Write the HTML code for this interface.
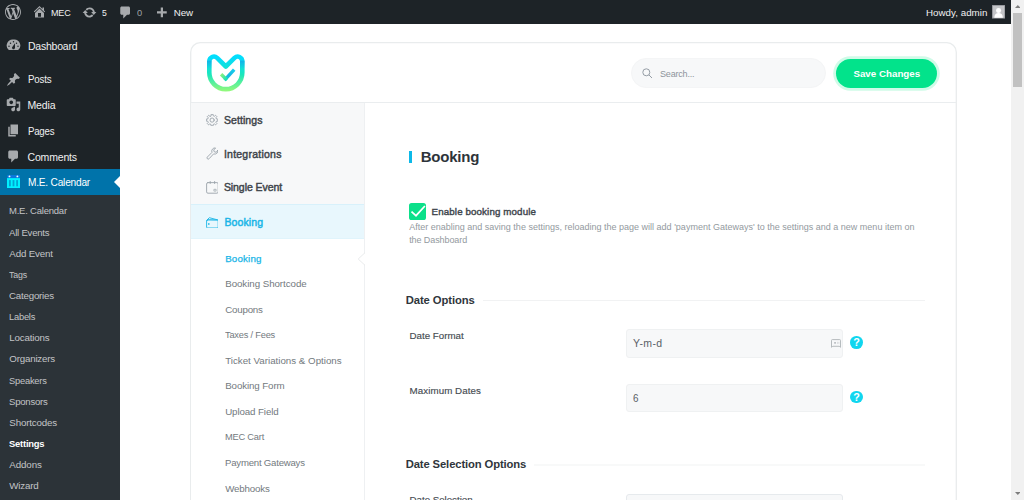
<!DOCTYPE html>
<html lang="en">
<head>
<meta charset="utf-8">
<title>Settings ‹ MEC — WordPress</title>
<style>
*{box-sizing:border-box;margin:0;padding:0}
html,body{width:1024px;height:500px;overflow:hidden;background:#fff}
body{font-family:"Liberation Sans",sans-serif;position:relative;color:#3c434a}
.t{position:absolute;white-space:nowrap;line-height:16px}
.a{position:absolute}
#bar{position:absolute;left:0;top:0;width:1011px;height:24px;background:#1d2327}
#menu{position:absolute;left:0;top:24px;width:120px;height:476px;background:#1d2327}
#cur{position:absolute;left:0;top:169px;width:120px;height:25.75px;background:#0073aa}
#sub{position:absolute;left:0;top:194.75px;width:120px;height:306px;background:#2c3338}
.ic{position:absolute;width:15px;height:15px;fill:#a7aaad}
#sb{position:absolute;left:1011px;top:0;width:13px;height:500px;background:#f1f1f1}
#wrap{position:absolute;left:190px;top:42.2px;width:767px;height:480px}
#hdrline{position:absolute;left:191px;top:102px;width:765px;height:1px;background:#eaedef}
#nav{position:absolute;left:191px;top:103px;width:172.5px;height:400px;background:#f7f8f9}
#navline{position:absolute;left:363.5px;top:103px;width:1px;height:400px;background:#eef0f2}
#act{position:absolute;left:191px;top:204px;width:172.5px;height:35px;background:#e8f7fd;border-top:1px solid #d8f1fb;border-bottom:1px solid #e0f4fc}
#nsub{position:absolute;left:191px;top:239px;width:172.5px;height:262px;background:#fff}
.ni{position:absolute;fill:none;stroke:#9aa3aa;stroke-width:.9;stroke-linejoin:round;stroke-linecap:round}
#search{position:absolute;left:631px;top:58px;width:195px;height:29.5px;border-radius:15px;background:#f7f8f9;border:1px solid #f4f5f6}
#save{position:absolute;left:836.25px;top:59px;width:101px;height:28.5px;border-radius:15px;background:#02e38b;box-shadow:0 0 0 2.8px #d0fbe8}
.inp{position:absolute;left:626px;width:217.2px;height:28.5px;border:1px solid #eff1f2;border-radius:3px;background:#f7f8f9}
.help{position:absolute;width:12.8px;height:12.8px;border-radius:50%;background:#10d6ef}
.hr{position:absolute;height:1px;background:#f1f2f3}
</style>
</head>
<body>

<div id="bar"></div>
<svg class="a" style="left:5px;top:4px" width="16" height="16" viewBox="0 0 20 20" fill="#a7aaad"><path d="M20 10c0-5.510-4.490-10-10-10C4.480 0 0 4.490 0 10c0 5.520 4.480 10 10 10 5.510 0 10-4.480 10-10zM7.780 15.370L4.370 6.220c.55-.02 1.170-.08 1.170-.08.5-.06.44-1.130-.06-1.110 0 0-1.450.11-2.370.11-.18 0-.37 0-.58-.01C4.120 2.690 6.870 1.110 10 1.110c2.330 0 4.450.87 6.050 2.340-.68-.11-1.650.39-1.650 1.580 0 .74.45 1.360.9 2.100.35.61.55 1.360.55 2.460 0 1.490-1.400 5-1.400 5l-3.030-8.370c.54-.02.82-.17.82-.17.5-.05.44-1.250-.06-1.220 0 0-1.440.12-2.380.12-.87 0-2.330-.12-2.330-.12-.5-.03-.56 1.200-.06 1.220l.92.08 1.260 3.410zM17.410 10c.24-.64.74-1.870.43-4.250.7 1.290 1.050 2.710 1.050 4.250 0 3.290-1.730 6.240-4.400 7.780.97-2.590 1.940-5.200 2.920-7.780zM6.100 18.090C3.120 16.650 1.110 13.530 1.110 10c0-1.300.23-2.480.72-3.590C3.250 10.300 4.670 14.200 6.100 18.090zm4.030-6.630l2.580 6.980c-.86.29-1.760.45-2.710.45-.79 0-1.570-.11-2.290-.33.81-2.380 1.620-4.740 2.420-7.100z"/></svg>
<svg class="a" style="left:31.5px;top:4.200px" width="15" height="15" viewBox="0 0 20 20" fill="#a7aaad"><path d="M16 8.500l1.530 1.530-1.060 1.060L10 4.620l-6.470 6.470-1.060-1.060L10 2.500l4 4v-2h2v4zm-6-2.460l6 5.990V18H4v-5.970zM12 17v-5H8v5h4z"/></svg>
<div class="t" id="b_mec" style="left:51.20px;top:5.00px;font-size:9.75px;color:#f0f0f1;letter-spacing:-0.220px;transform:scaleX(0.9279);transform-origin:0 50%;">MEC</div>
<svg class="a" style="left:82px;top:4.500px" width="15" height="15" viewBox="0 0 20 20" fill="#a7aaad"><path d="M10.200 3.280c3.530 0 6.430 2.610 6.920 6h2.080l-3.500 4-3.500-4h2.320c-.45-1.970-2.210-3.450-4.320-3.450-1.450 0-2.730.71-3.540 1.780L4.950 5.660C6.230 4.200 8.110 3.280 10.200 3.280zm-.4 13.440c-3.520 0-6.430-2.610-6.920-6H.8l3.500-4c1.170 1.330 2.330 2.670 3.500 4H5.480c.45 1.970 2.210 3.450 4.320 3.450 1.450 0 2.730-.71 3.540-1.780l1.710 1.950c-1.280 1.460-3.150 2.380-5.250 2.380z"/></svg>
<div class="t" id="b_5" style="left:101.50px;top:5.00px;font-size:9.75px;color:#f0f0f1;transform:scaleX(0.8828);transform-origin:0 50%;">5</div>
<svg class="a" style="left:117.600px;top:5.300px" width="15" height="15" viewBox="0 0 20 20" fill="#a7aaad"><path d="M5 2h9c1.100 0 2 .9 2 2v7c0 1.100-.9 2-2 2h-2l-5 5v-5H5c-1.100 0-2-.9-2-2V4c0-1.100.9-2 2-2z"/></svg>
<div class="t" id="b_0" style="left:137.30px;top:5.00px;font-size:9.75px;color:#9ca1a6;transform:scaleX(0.9563);transform-origin:0 50%;">0</div>
<svg class="a" style="left:153.800px;top:5.700px" width="15" height="15" viewBox="0 0 20 20" fill="#a7aaad"><path d="M17 7v3h-5v5H9v-5H4V7h5V2h3v5h5z"/></svg>
<div class="t" id="b_new" style="left:173.80px;top:5.00px;font-size:9.75px;color:#f0f0f1;letter-spacing:-0.108px;">New</div>
<div class="t" id="b_howdy" style="left:926.00px;top:5.00px;font-size:9.75px;color:#f0f0f1;letter-spacing:0.031px;">Howdy, admin</div>
<svg class="a" style="left:992px;top:5.300px" width="13.200" height="13.600" viewBox="0 0 13.200 13.600"><rect width="13.200" height="13.600" fill="#8c8f94"/><rect x=".8" y=".8" width="11.600" height="12" fill="#c3c4c7"/><circle cx="6.600" cy="5.400" r="2.500" fill="#fff"/><path d="M2.300 12.800c.2-3.300 1.900-4.700 4.300-4.700s4.100 1.400 4.300 4.700z" fill="#fff"/></svg>
<div id="menu"></div><div id="cur"></div><div id="sub"></div>
<svg class="a" style="left:114px;top:176.400px" width="6" height="12" viewBox="0 0 6 12"><path d="M6 0L0 6l6 6z" fill="#fff"/></svg>
<svg class="ic" style="left:6px;top:38.2px" viewBox="0 0 20 20"><path d="M3.760 16h12.480A7.998 7.998 0 0010 2a7.998 7.998 0 00-6.240 14zM10 4c.55 0 1 .45 1 1s-.45 1-1 1-1-.45-1-1 .45-1 1-1zM6 6c.55 0 1 .45 1 1s-.45 1-1 1-1-.45-1-1 .45-1 1-1zm8 0c.55 0 1 .45 1 1s-.45 1-1 1-1-.45-1-1 .45-1 1-1zm-5.370 5.550L12 7v6c0 1.100-.9 2-2 2s-2-.9-2-2c0-.57.24-1.080.63-1.450zM4 10c.55 0 1 .45 1 1s-.45 1-1 1-1-.45-1-1 .45-1 1-1zm12 0c.55 0 1 .45 1 1s-.45 1-1 1-1-.45-1-1 .45-1 1-1z"/></svg>
<div class="t" id="m_dash" style="left:27.50px;top:38.00px;font-size:10.5px;color:#f0f0f1;letter-spacing:-0.220px;transform:scaleX(0.9977);transform-origin:0 50%;">Dashboard</div>
<svg class="ic" style="left:6px;top:71.8px" viewBox="0 0 20 20"><path d="M10.440 3.020l1.820-1.820 6.360 6.350-1.830 1.820c-1.050-.68-2.480-.57-3.410.36l-.75.75c-.92.93-1.040 2.350-.35 3.410l-1.830 1.820-2.410-2.410-2.800 2.790c-.42.42-3.380 2.710-3.800 2.290s1.860-3.390 2.280-3.810l2.790-2.790L4.100 9.360l1.830-1.820c1.050.69 2.480.57 3.400-.36l.75-.75c.93-.92 1.050-2.350.36-3.410z"/></svg>
<div class="t" id="m_posts" style="left:27.50px;top:71.00px;font-size:10.5px;color:#f0f0f1;letter-spacing:-0.220px;transform:scaleX(0.9257);transform-origin:0 50%;">Posts</div>
<svg class="ic" style="left:6px;top:97.4px" viewBox="0 0 20 20"><path d="M13 11V4c0-.55-.45-1-1-1h-1.670L9 1H5L3.670 3H2c-.55 0-1 .45-1 1v7c0 .55.45 1 1 1h10c.55 0 1-.45 1-1zM7 4.500c1.380 0 2.500 1.120 2.500 2.500S8.380 9.500 7 9.500 4.500 8.380 4.500 7 5.620 4.500 7 4.500zM14 6h5v10.500c0 1.380-1.120 2.500-2.500 2.500S14 17.880 14 16.500s1.120-2.500 2.500-2.500c.17 0 .34.02.5.05V9h-3V6zm-4 8.050V13h2v3.500c0 1.380-1.120 2.500-2.500 2.500S7 17.880 7 16.500 8.120 14 9.500 14c.17 0 .34.02.5.05z"/></svg>
<div class="t" id="m_media" style="left:27.50px;top:97.00px;font-size:10.5px;color:#f0f0f1;letter-spacing:-0.127px;">Media</div>
<svg class="ic" style="left:6px;top:123.3px" viewBox="0 0 20 20"><path d="M6 15V2h10v13H6zm-1 1h8v2H3V5h2v11z"/></svg>
<div class="t" id="m_pages" style="left:27.50px;top:123.00px;font-size:10.5px;color:#f0f0f1;letter-spacing:-0.220px;transform:scaleX(0.9169);transform-origin:0 50%;">Pages</div>
<svg class="ic" style="left:6px;top:149.3px" viewBox="0 0 20 20"><path d="M5 2h9c1.100 0 2 .9 2 2v7c0 1.100-.9 2-2 2h-2l-5 5v-5H5c-1.100 0-2-.9-2-2V4c0-1.100.9-2 2-2z"/></svg>
<div class="t" id="m_comm" style="left:27.50px;top:149.00px;font-size:10.5px;color:#f0f0f1;letter-spacing:-0.167px;">Comments</div>
<svg class="a" style="left:7px;top:174.800px" width="13.300" height="13.300" viewBox="0 0 13.300 13.300"><rect x=".3" y="0" width="12.700" height="3.200" fill="#0a78dc"/><circle cx="2.500" cy="1.400" r=".95" fill="#fff"/><circle cx="10.400" cy="1.400" r=".95" fill="#fff"/><rect x="0" y="3.100" width="13.300" height="10.200" fill="#00f0ff"/><rect x="2" y="5.100" width="1.800" height="6.200" fill="#00a4d2"/><rect x="5.600" y="5.100" width="1.800" height="6.200" fill="#00a4d2"/><rect x="9.200" y="5.100" width="1.800" height="6.200" fill="#00a4d2"/></svg>
<div class="t" id="m_mec" style="left:27.50px;top:174.00px;font-size:10.5px;color:#fff;letter-spacing:-0.220px;transform:scaleX(0.9646);transform-origin:0 50%;">M.E. Calendar</div>
<div class="t" id="s_0" style="left:9.30px;top:203.00px;font-size:9.75px;color:#c3c4c7;letter-spacing:-0.220px;transform:scaleX(0.9734);transform-origin:0 50%;">M.E. Calendar</div>
<div class="t" id="s_1" style="left:9.30px;top:225.00px;font-size:9.75px;color:#c3c4c7;letter-spacing:-0.220px;transform:scaleX(0.9812);transform-origin:0 50%;">All Events</div>
<div class="t" id="s_2" style="left:9.30px;top:246.00px;font-size:9.75px;color:#c3c4c7;letter-spacing:-0.162px;">Add Event</div>
<div class="t" id="s_3" style="left:9.30px;top:267.00px;font-size:9.75px;color:#c3c4c7;letter-spacing:-0.220px;transform:scaleX(0.9073);transform-origin:0 50%;">Tags</div>
<div class="t" id="s_4" style="left:9.30px;top:288.00px;font-size:9.75px;color:#c3c4c7;letter-spacing:-0.220px;transform:scaleX(0.9983);transform-origin:0 50%;">Categories</div>
<div class="t" id="s_5" style="left:9.30px;top:309.00px;font-size:9.75px;color:#c3c4c7;letter-spacing:-0.220px;transform:scaleX(0.9535);transform-origin:0 50%;">Labels</div>
<div class="t" id="s_6" style="left:9.30px;top:330.00px;font-size:9.75px;color:#c3c4c7;letter-spacing:-0.175px;">Locations</div>
<div class="t" id="s_7" style="left:9.30px;top:351.00px;font-size:9.75px;color:#c3c4c7;letter-spacing:-0.204px;">Organizers</div>
<div class="t" id="s_8" style="left:9.30px;top:373.00px;font-size:9.75px;color:#c3c4c7;letter-spacing:-0.220px;transform:scaleX(0.9543);transform-origin:0 50%;">Speakers</div>
<div class="t" id="s_9" style="left:9.30px;top:394.00px;font-size:9.75px;color:#c3c4c7;letter-spacing:-0.220px;transform:scaleX(0.9795);transform-origin:0 50%;">Sponsors</div>
<div class="t" id="s_10" style="left:9.30px;top:415.00px;font-size:9.75px;color:#c3c4c7;letter-spacing:-0.164px;">Shortcodes</div>
<div class="t" id="s_11" style="left:9.30px;top:436.00px;font-size:9.75px;color:#fff;font-weight:700;letter-spacing:-0.220px;transform:scaleX(0.9640);transform-origin:0 50%;">Settings</div>
<div class="t" id="s_12" style="left:9.30px;top:457.00px;font-size:9.75px;color:#c3c4c7;letter-spacing:-0.096px;">Addons</div>
<div class="t" id="s_13" style="left:9.30px;top:478.00px;font-size:9.75px;color:#c3c4c7;letter-spacing:-0.199px;">Wizard</div>
<div id="sb"></div>
<div class="a" style="left:1013px;top:13px;width:9.200px;height:74.400px;background:#c1c1c1"></div>
<svg class="a" style="left:1014.800px;top:5px" width="5.600" height="3" viewBox="0 0 5.600 3"><path d="M0 3L2.800 0l2.800 3z" fill="#7d7d7d"/></svg>
<svg class="a" style="left:1014.800px;top:491.500px" width="5.600" height="3" viewBox="0 0 5.600 3"><path d="M0 0h5.600L2.800 3z" fill="#7d7d7d"/></svg>
<svg id="wrap" viewBox="0 0 767 480"><rect x=".7" y=".7" width="765.600" height="500" rx="9.500" fill="#fff" stroke="#e9eced" stroke-width="1.300"/></svg><div id="hdrline"></div><div id="nav"></div><div id="act"></div><div id="nsub"></div><div id="navline"></div>
<svg class="a" style="left:356.500px;top:251.700px" width="9" height="14" viewBox="0 0 9 14"><path d="M9 0v14H8V13L1.200 7 8 1V0z" fill="#fff"/><path d="M8 .7L1.200 7 8 13.300" fill="none" stroke="#e9ebec" stroke-width="1"/></svg>
<svg class="a" style="left:206.900px;top:54.150px" width="38" height="38" viewBox="0 0 38 38">
<defs><linearGradient id="g" gradientUnits="userSpaceOnUse" x1="0" y1="0" x2="0" y2="37"><stop offset="0" stop-color="#00e1ff"/><stop offset=".12" stop-color="#05dcfb"/><stop offset=".55" stop-color="#1ae6bd"/><stop offset="1" stop-color="#93f97c"/></linearGradient>
<linearGradient id="g2" gradientUnits="userSpaceOnUse" x1="0" y1="3" x2="0" y2="15"><stop offset="0" stop-color="#1a9fe0" stop-opacity="0"/><stop offset=".35" stop-color="#1a9fe0" stop-opacity=".65"/><stop offset="1" stop-color="#1a9fe0" stop-opacity="0"/></linearGradient>
<linearGradient id="g3" gradientUnits="userSpaceOnUse" x1="13.500" y1="19.600" x2="19.500" y2="25.600"><stop offset="0" stop-color="#9af27a"/><stop offset="1" stop-color="#12e2b4"/></linearGradient>
<linearGradient id="g4" gradientUnits="userSpaceOnUse" x1="18" y1="25.500" x2="27.500" y2="15.500"><stop offset="0" stop-color="#10d6d8"/><stop offset=".4" stop-color="#17b4e2"/><stop offset="1" stop-color="#14d0ec"/></linearGradient></defs>
<path d="M2.300 18.600V7.600C2.300 3.200 7 1 10.100 3.900L18.800 12.500 27.500 3.900C30.600 1 35.300 3.200 35.300 7.600V18.600A16.500 16.500 0 0 1 2.300 18.600Z" fill="none" stroke="url(#g)" stroke-width="4.600" stroke-linejoin="round"/>
<path d="M2.300 17V6.500M35.300 17V6.500" fill="none" stroke="url(#g2)" stroke-width="4.600"/>
<path d="M17.540 26.040L27.200 15.700" fill="none" stroke="url(#g4)" stroke-width="3.400"/>
<path d="M14.100 20.200L19.900 26" fill="none" stroke="url(#g3)" stroke-width="3.400"/>
</svg>
<div id="search"></div>
<svg class="a" style="left:642px;top:68px" width="11" height="11" viewBox="0 0 11 11" fill="none" stroke="#959da5" stroke-width="1"><circle cx="4.300" cy="4.300" r="3.500"/><path d="M6.900 6.900L10 10"/></svg>
<div class="t" id="h_search" style="left:660.00px;top:66.00px;font-size:9.75px;color:#8d949b;letter-spacing:-0.220px;transform:scaleX(0.9283);transform-origin:0 50%;">Search...</div>
<div id="save"></div>
<div class="t" id="h_save" style="left:853.40px;top:66.00px;font-size:9.75px;color:#fff;font-weight:700;letter-spacing:0.013px;">Save Changes</div>
<svg class="ni" style="left:205.700px;top:114px" width="12.200" height="12.200" viewBox="0 0 12.200 12.200"><path d="M5.05 1.72L5.10 0.29L7.10 0.29L7.15 1.72L8.45 2.26L9.51 1.28L10.92 2.69L9.94 3.75L10.48 5.05L11.91 5.10L11.91 7.10L10.48 7.15L9.94 8.45L10.92 9.51L9.51 10.92L8.45 9.94L7.15 10.48L7.10 11.91L5.10 11.91L5.05 10.48L3.75 9.94L2.69 10.92L1.28 9.51L2.26 8.45L1.72 7.15L0.29 7.10L0.29 5.10L1.72 5.05L2.26 3.75L1.28 2.69L2.69 1.28L3.75 2.26Z"/><circle cx="6.100" cy="6.100" r="2.100"/></svg>
<div class="t" id="n_settings" style="left:223.90px;top:112.00px;font-size:10.5px;color:#3f454b;-webkit-text-stroke:0.45px currentColor;letter-spacing:0.078px;">Settings</div>
<svg class="ni" style="left:205.500px;top:147px" width="12.800" height="12.800" viewBox="0 0 12.800 12.800"><path d="M11.900 3.400a3.200 3.200 0 0 1-4.300 3.500L3.100 11.700a1.200 1.200 0 0 1-1.800-1.600L6 5.400a3.200 3.200 0 0 1 3.600-4.400L7.700 3l.5 1.700 1.700.5z"/></svg>
<div class="t" id="n_integ" style="left:223.90px;top:146.00px;font-size:10.5px;color:#3f454b;-webkit-text-stroke:0.45px currentColor;letter-spacing:0.239px;">Integrations</div>
<svg class="ni" style="left:205.500px;top:181px" width="12.800" height="12.800" viewBox="0 0 12.800 12.800"><rect x=".6" y="1.600" width="11.600" height="10.600" rx="1.300"/><path d="M4.200 .5v2M8.600 .5v2"/><rect x="8.300" y="8.300" width="1.800" height="1.800" stroke-width=".7"/></svg>
<div class="t" id="n_single" style="left:223.90px;top:179.00px;font-size:10.5px;color:#3f454b;-webkit-text-stroke:0.45px currentColor;letter-spacing:-0.065px;">Single Event</div>
<svg class="ni" style="left:205.500px;top:216.500px;stroke:#19b5e7" width="12.800" height="11.600" viewBox="0 0 12.800 11.600"><rect x=".6" y="3" width="11.600" height="8" rx=".9"/><path d="M.7 3.400L3.300 .7l8.400 2.200"/><path d="M2.400 2.500l8 0.500" stroke-width=".6"/><circle cx="2.700" cy="7" r=".35" fill="#19b5e7"/></svg>
<div class="t" id="n_booking" style="left:224.40px;top:214.00px;font-size:10.5px;color:#19b5e7;-webkit-text-stroke:0.45px currentColor;letter-spacing:0.133px;">Booking</div>
<div class="t" id="ns_0" style="left:225.20px;top:251.00px;font-size:9.75px;color:#19b5e7;-webkit-text-stroke:0.25px currentColor;letter-spacing:0.169px;">Booking</div>
<div class="t" id="ns_1" style="left:225.20px;top:276.00px;font-size:9.75px;color:#737a80;letter-spacing:-0.056px;">Booking Shortcode</div>
<div class="t" id="ns_2" style="left:225.20px;top:302.00px;font-size:9.75px;color:#737a80;letter-spacing:-0.214px;">Coupons</div>
<div class="t" id="ns_3" style="left:225.20px;top:327.00px;font-size:9.75px;color:#737a80;letter-spacing:-0.220px;transform:scaleX(0.9506);transform-origin:0 50%;">Taxes / Fees</div>
<div class="t" id="ns_4" style="left:225.20px;top:353.00px;font-size:9.75px;color:#737a80;letter-spacing:-0.001px;">Ticket Variations &amp; Options</div>
<div class="t" id="ns_5" style="left:225.20px;top:378.00px;font-size:9.75px;color:#737a80;letter-spacing:-0.109px;">Booking Form</div>
<div class="t" id="ns_6" style="left:225.20px;top:404.00px;font-size:9.75px;color:#737a80;letter-spacing:-0.114px;">Upload Field</div>
<div class="t" id="ns_7" style="left:225.20px;top:429.00px;font-size:9.75px;color:#737a80;letter-spacing:-0.220px;transform:scaleX(0.9514);transform-origin:0 50%;">MEC Cart</div>
<div class="t" id="ns_8" style="left:225.20px;top:455.00px;font-size:9.75px;color:#737a80;letter-spacing:-0.220px;transform:scaleX(0.9847);transform-origin:0 50%;">Payment Gateways</div>
<div class="t" id="ns_9" style="left:225.20px;top:481.00px;font-size:9.75px;color:#737a80;letter-spacing:-0.163px;">Webhooks</div>
<div class="a" style="left:409px;top:150.600px;width:3px;height:12.200px;background:#0cb9e8"></div>
<div class="t" id="c_title" style="left:420.70px;top:149.00px;font-size:15px;color:#2e343a;font-weight:700;letter-spacing:-0.208px;">Booking</div>
<div class="a" style="left:409px;top:203px;width:17px;height:16.600px;border-radius:2.600px;background:#0ce08a"></div>
<svg class="a" style="left:409px;top:203px" width="17" height="16.600" viewBox="0 0 17 16.600"><path d="M2.500 8.700L7 12.700L15.900 3" fill="none" stroke="#fff" stroke-width="1.700"/></svg>
<div class="t" id="c_enable" style="left:431.60px;top:204.00px;font-size:9.75px;color:#40464c;-webkit-text-stroke:0.4px currentColor;letter-spacing:0.119px;">Enable booking module</div>
<div class="t" id="c_d1" style="left:409.20px;top:219.00px;font-size:9px;color:#939aa0;letter-spacing:0.004px;">After enabling and saving the settings, reloading the page will add 'payment Gateways' to the settings and a new menu item on</div>
<div class="t" id="c_d2" style="left:409.20px;top:232.00px;font-size:9px;color:#939aa0;letter-spacing:-0.087px;">the Dashboard</div>
<div class="t" id="c_h1" style="left:405.70px;top:292.00px;font-size:11.25px;color:#30363c;font-weight:700;letter-spacing:-0.074px;">Date Options</div>
<div class="hr" style="left:482.500px;top:300px;width:442.500px"></div>
<div class="t" id="c_l1" style="left:409.60px;top:328.00px;font-size:9.75px;color:#454b51;-webkit-text-stroke:0.15px currentColor;letter-spacing:-0.014px;">Date Format</div>
<div class="inp" style="top:329px"></div>
<div class="t" id="c_v1" style="left:633.00px;top:335.00px;font-size:10.5px;color:#5a6066;letter-spacing:0.394px;">Y-m-d</div>
<svg class="a" style="left:831px;top:338.700px" width="10" height="9.600" viewBox="0 0 10 9.600" fill="none" stroke="#aeb3b7" stroke-width=".9" stroke-linejoin="round"><path d="M1.300 .6h7.400a.8 .8 0 0 1 .8 .8v6.900l-1.300-1H1.800l-1.300 1V1.400a.8 .8 0 0 1 .8-.8z"/><rect x="3.300" y="3" width="1.500" height="1.700" fill="#aeb3b7" stroke="none"/><path d="M6.700 2.800v2.200M7.900 3.200v1.400" stroke-width=".6" opacity=".7"/></svg>
<div class="help" style="left:850px;top:336px"></div>
<div class="t" id="c_q1" style="left:853.35px;top:334.00px;font-size:10.8px;color:#fff;font-weight:700;">?</div>
<div class="t" id="c_l2" style="left:409.60px;top:383.00px;font-size:9.75px;color:#454b51;-webkit-text-stroke:0.15px currentColor;letter-spacing:0.068px;">Maximum Dates</div>
<div class="inp" style="top:383.800px"></div>
<div class="t" id="c_v2" style="left:633.20px;top:390.00px;font-size:10.5px;color:#5a6066;transform:scaleX(0.9412);transform-origin:0 50%;">6</div>
<div class="help" style="left:850px;top:390.600px"></div>
<div class="t" id="c_q2" style="left:853.35px;top:389.00px;font-size:10.8px;color:#fff;font-weight:700;">?</div>
<div class="t" id="c_h2" style="left:405.70px;top:456.00px;font-size:11.25px;color:#30363c;font-weight:700;letter-spacing:-0.119px;">Date Selection Options</div>
<div class="hr" style="left:533.500px;top:464px;width:391.500px;height:2px;background:#f8f9f9"></div>
<div class="t" id="c_l3" style="left:409.60px;top:492.00px;font-size:9.75px;color:#454b51;-webkit-text-stroke:0.15px currentColor;letter-spacing:-0.032px;">Date Selection</div>
<div class="inp" style="top:494px;border-color:#e6eaed"></div>
</body></html>
